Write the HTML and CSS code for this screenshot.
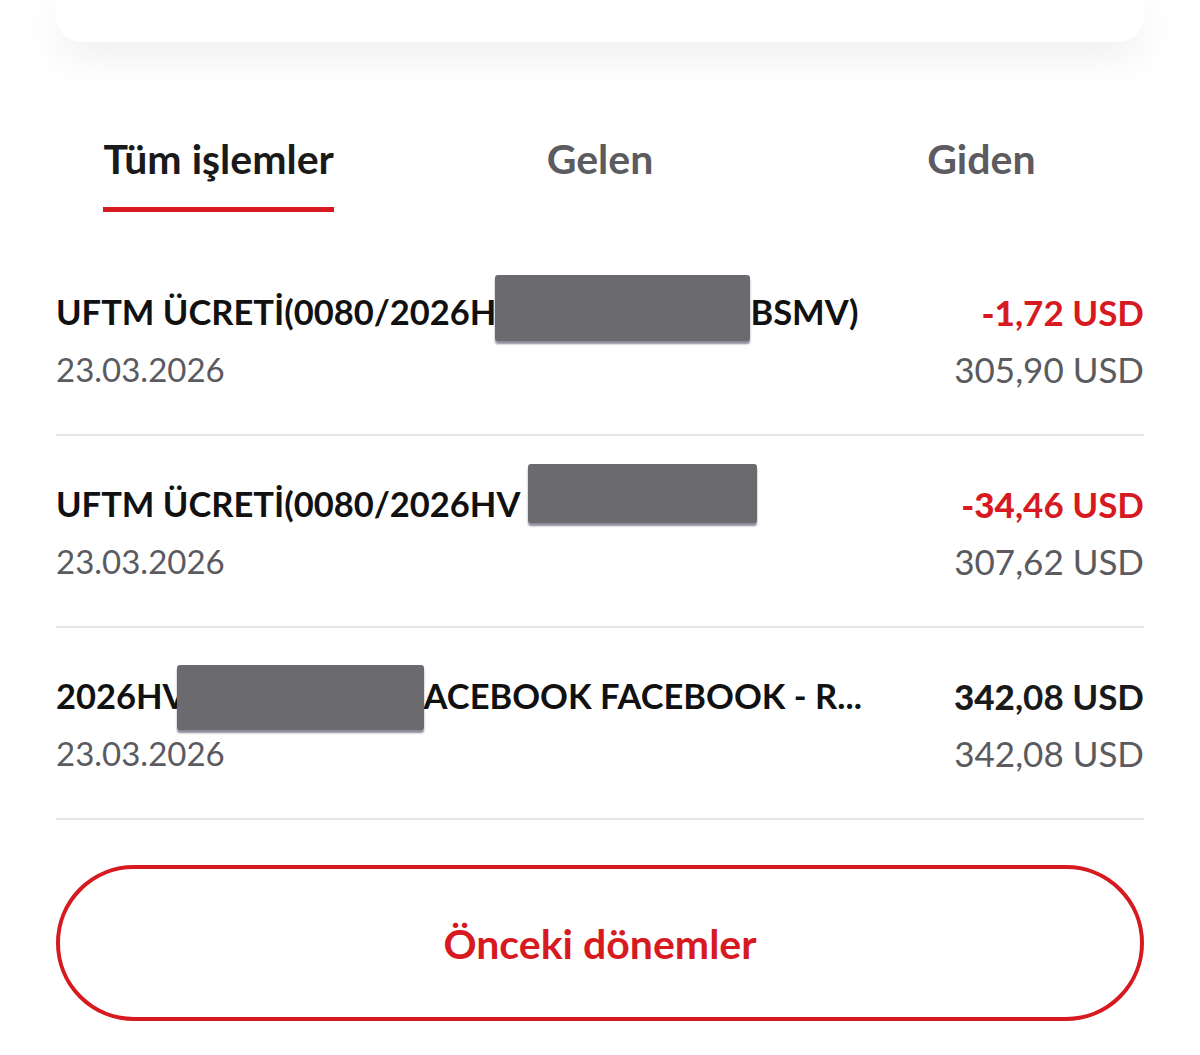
FILE: index.html
```html
<!DOCTYPE html>
<html lang="tr">
<head>
<meta charset="utf-8">
<title>İşlemler</title>
<link rel="stylesheet" href="styles.css">
</head>
<body>
<div class="card"></div>

<nav class="tabs">
  <div class="tab active"><span class="tab-label">Tüm işlemler</span></div>
  <div class="tab"><span class="tab-label">Gelen</span></div>
  <div class="tab"><span class="tab-label">Giden</span></div>
</nav>

<ul class="list">
  <li class="row">
    <div class="info">
      <div class="title">UFTM ÜCRETİ(0080/2026H<span class="mask m1"></span>BSMV)</div>
      <div class="date">23.03.2026</div>
    </div>
    <div class="amounts">
      <div class="amount neg"><b>-1</b>,72 USD</div>
      <div class="balance">305,90 USD</div>
    </div>
  </li>
  <li class="row">
    <div class="info">
      <div class="title">UFTM ÜCRETİ(0080/2026HV<span class="mask m2"></span></div>
      <div class="date">23.03.2026</div>
    </div>
    <div class="amounts">
      <div class="amount neg"><b>-34</b>,46 USD</div>
      <div class="balance">307,62 USD</div>
    </div>
  </li>
  <li class="row">
    <div class="info">
      <div class="title">2026HV<span class="mask m3"></span>ACEBOOK FACEBOOK - R...</div>
      <div class="date">23.03.2026</div>
    </div>
    <div class="amounts">
      <div class="amount"><b>342</b>,08 USD</div>
      <div class="balance">342,08 USD</div>
    </div>
  </li>
</ul>

<div class="actions">
  <button class="btn-outline" type="button">Önceki dönemler</button>
</div>
</body>
</html>
```
FILE: styles.css
```css
* { box-sizing: border-box; }

html, body {
  margin: 0;
  padding: 0;
  background: #ffffff;
}

body {
  font-family: "Lato", "Noto Sans", "DejaVu Sans", sans-serif;
  color: #141414;
  width: 1200px;
  height: 1055px;
  overflow: hidden;
}

.card {
  height: 42px;
  margin: 0 56px;
  background: #ffffff;
  border-radius: 0 0 26px 26px;
  box-shadow: 0 14px 40px rgba(0, 0, 0, 0.07);
}

.tabs {
  display: grid;
  grid-template-columns: repeat(3, 1fr);
  padding: 0 28px;
  margin-top: 92px;
  height: 110px;
}

.tab {
  display: flex;
  justify-content: center;
  align-items: flex-start;
}

.tab-label {
  display: inline-block;
  font-size: 41px;
  font-weight: 700;
  line-height: 50px;
  color: #5b5b60;
  padding-bottom: 23px;
  border-bottom: 5px solid transparent;
}

.tab.active .tab-label {
  color: #1a1a1a;
  border-bottom-color: #d71a1f;
}

.list {
  list-style: none;
  margin: 0 56px;
  padding: 0;
}

.row {
  display: flex;
  justify-content: space-between;
  align-items: flex-start;
  height: 192px;
  padding-top: 48px;
  border-bottom: 2px solid #e7e7e9;
}

.info {
  min-width: 0;
}

.title {
  font-size: 34.5px;
  font-weight: 700;
  line-height: 40px;
  color: #111111;
  white-space: nowrap;
}

.date {
  margin-top: 17px;
  font-size: 33px;
  font-weight: 400;
  line-height: 40px;
  color: #5a5a5f;
}

.mask {
  display: inline-block;
  position: relative;
  vertical-align: middle;
  margin: -20px 0;
  background: #6b6a6e;
  border-radius: 3px;
  box-shadow: 0 3px 2px rgba(45, 45, 70, 0.55);
}

.m1 { width: 255px; height: 66px; margin-left: -1px; top: -8px; }
.m2 { width: 229px; height: 59px; margin-left: 8px; top: -15px; }
.m3 { width: 247px; height: 65px; margin-left: -10px; top: -3px; }

.amounts {
  text-align: right;
  flex-shrink: 0;
}

.amount {
  font-size: 35px;
  font-weight: 700;
  line-height: 40px;
  color: #1a1a1a;
}

.amount b {
  font-weight: 900;
}

.amount.neg {
  color: #d71a1f;
}

.balance {
  margin-top: 17px;
  font-size: 35px;
  font-weight: 400;
  line-height: 40px;
  color: #5a5a5f;
}

.actions {
  margin: 45px 56px 0;
}

.btn-outline {
  display: block;
  width: 100%;
  height: 156px;
  background: #ffffff;
  border: 4px solid #d71a1f;
  border-radius: 80px;
  font-family: inherit;
  font-size: 41px;
  font-weight: 700;
  color: #d71a1f;
  cursor: pointer;
}
```
